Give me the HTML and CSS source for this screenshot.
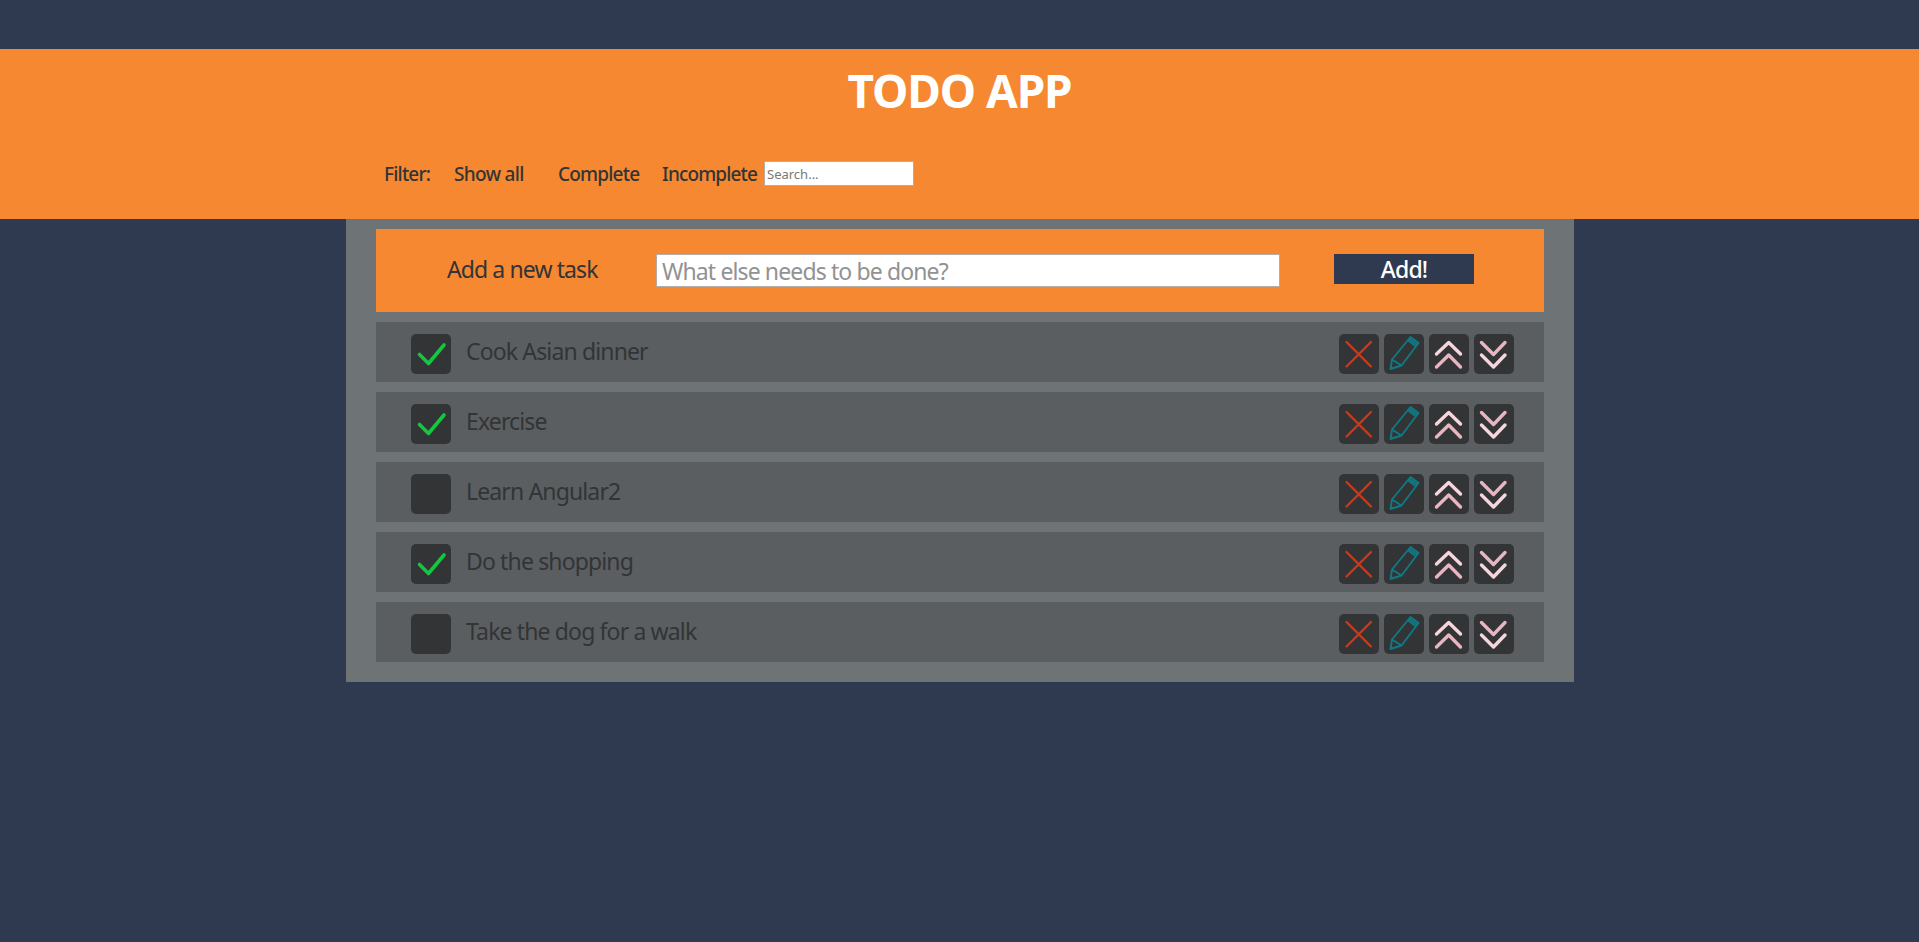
FILE: index.html
```html
<!DOCTYPE html>
<html lang="en">
<head>
<meta charset="utf-8">
<title>Todo App</title>
<link rel="stylesheet" href="styles.css">
</head>
<body>
<header class="header">
  <h1 class="title">TODO APP</h1>
  <nav class="filters">
    <span class="filter-label">Filter:</span>
    <a class="filter show-all">Show all</a>
    <a class="filter complete">Complete</a>
    <a class="filter incomplete">Incomplete</a>
    <input class="search" type="text" placeholder="Search...">
  </nav>
</header>
<main class="board">
  <form class="add">
    <label class="add-label">Add a new task</label>
    <input class="add-input" type="text" placeholder="What else needs to be done?">
    <button class="add-button" type="button">Add!</button>
  </form>
  <ul class="tasks" id="tasks"></ul>
</main>
<svg class="defs" width="0" height="0">
  <defs>
    <symbol id="check" viewBox="0 0 40 40"><path d="M8.5 20.5 17.5 29.5 33 11" fill="none" stroke="#11c83f" stroke-width="3.6" stroke-linecap="round" stroke-linejoin="round"/></symbol>
    <symbol id="cross" viewBox="0 0 40 40"><path d="M7.5 8 32 32.5M32 8 7.5 32.5" fill="none" stroke="#cf3717" stroke-width="2.4" stroke-linecap="round"/></symbol>
    <symbol id="pencil" viewBox="0 0 40 40"><path d="M26.5 3 34.5 9 17.5 31.5 6.5 35 8 25.5ZM8 25.5 17.5 31.5M24 6.3 32 12.4M25.3 4.7 33.3 10.8" fill="none" stroke="#107983" stroke-width="1.9" stroke-linejoin="round"/><path d="M6.5 35 7 31.5 10 34Z" fill="#107983"/></symbol>
    <symbol id="up" viewBox="0 0 40 40"><path d="M7.5 20 19.7 8.5 31.5 20" fill="none" stroke="#f6d6dc" stroke-width="3.4" stroke-linecap="round" stroke-linejoin="round"/><path d="M7.5 33 19.7 21 31.5 33" fill="none" stroke="#e9b5c0" stroke-width="3.4" stroke-linecap="round" stroke-linejoin="round"/></symbol>
    <symbol id="down" viewBox="0 0 40 40"><path d="M7.5 8.5 19.5 20.5 31 8.5" fill="none" stroke="#e9b5c0" stroke-width="3.4" stroke-linecap="round" stroke-linejoin="round"/><path d="M7.5 21 19.5 33 31 21" fill="none" stroke="#f6d6dc" stroke-width="3.4" stroke-linecap="round" stroke-linejoin="round"/></symbol>
  </defs>
</svg>
<script src="app.js"></script>
</body>
</html>
```
FILE: styles.css
```css
* { box-sizing: border-box; }
body {
  margin: 0;
  padding-top: 49px;
  background: #2f3950;
  color: #323436;
  font-family: "Noto Sans", "Open Sans", sans-serif;
}
.header { height: 170px; background: #f58830; }
.title {
  margin: 0;
  padding-top: 9px;
  text-align: center;
  color: #fff;
  font-size: 46px;
  line-height: 64px;
  letter-spacing: -1.1px;
}
.filters {
  display: flex;
  align-items: center;
  margin-top: 38px;
  padding-left: 384px;
  height: 27px;
  font-size: 19px;
  line-height: 25px;
  font-weight: 500;
  white-space: nowrap;
}
.filter-label, .filter { padding-top: 2px; letter-spacing: -0.8px; }
.filter-label { width: 70px; }
.show-all { width: 104px; letter-spacing: -0.65px; }
.complete { width: 104px; }
.incomplete { width: 102px; letter-spacing: -0.85px; }
.search {
  width: 150px;
  height: 25px;
  padding: 1px 2px;
  border: 1px solid #b5aca6;
  background: #fff;
  font: 13px "Noto Sans", sans-serif;
}
.search::placeholder { color: #777; }
.board {
  width: 1228px;
  margin: 0 auto 0 346px;
  padding: 10px 30px 20px;
  background: #6e7375;
}
.add {
  display: flex;
  align-items: flex-start;
  height: 83px;
  padding: 25px 70px 0 71px;
  background: #f58830;
}
.add-label {
  width: 209px;
  font-size: 23px;
  line-height: 30px;
  letter-spacing: -0.9px;
}
.add-input {
  width: 624px;
  height: 33px;
  padding: 0 5px;
  border: 1px solid #b5aca6;
  background: #fff;
  font: 23px "Noto Sans", sans-serif;
  letter-spacing: -0.88px;
}
.add-input::placeholder { color: #929292; }
.add-button {
  width: 140px;
  height: 30px;
  margin-left: auto;
  padding: 1px 0 0;
  border: 0;
  background: #2f3950;
  color: #fff;
  font: 500 23px/29px "Noto Sans", sans-serif;
  letter-spacing: -0.9px;
}
.tasks { margin: 0; padding: 0; list-style: none; }
.task {
  display: flex;
  align-items: center;
  height: 60px;
  margin-top: 10px;
  padding: 4px 30px 0 35px;
  background: #5a5e60;
}
.box { width: 40px; height: 40px; border-radius: 5px; background: #323436; }
.box svg { display: block; width: 40px; height: 40px; }
.task-name {
  flex: 1;
  padding: 0 0 7px 15px;
  font-size: 23px;
  line-height: 32px;
  letter-spacing: -0.86px;
}
.tools { display: flex; gap: 5px; }
.defs { position: absolute; }
```
FILE: app.js
```js
const tasks = [
  ["Cook Asian dinner", true],
  ["Exercise", true],
  ["Learn Angular2", false],
  ["Do the shopping", true],
  ["Take the dog for a walk", false]
];
const icon = (name) => `<svg><use href="#${name}"/></svg>`;
document.getElementById("tasks").innerHTML = tasks.map(([name, done]) => `
  <li class="task">
    <div class="box">${done ? icon("check") : ""}</div>
    <div class="task-name"><span>${name}</span></div>
    <div class="tools">${["cross", "pencil", "up", "down"].map((n) => `<div class="box">${icon(n)}</div>`).join("")}</div>
  </li>`).join("");
```
